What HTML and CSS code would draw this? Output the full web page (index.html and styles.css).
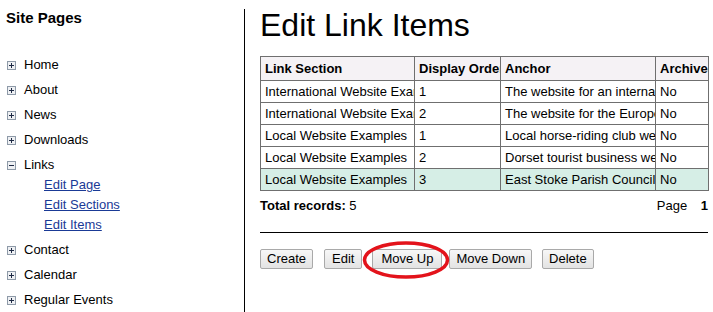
FILE: index.html
```html
<html>
	<head>
		<title>Edit Link Items</title>
		<link rel="stylesheet" href="styles.css">
	</head>
	<body>
		<div class="page">
			<div class="sidebar">
				<h2>Site Pages</h2>
				<ul class="tree">
					<li><svg class="node" width="9" height="9" viewBox="0 0 9 9"><rect x="0.5" y="0.5" width="8" height="8" fill="#eef0f3" stroke="#8e9aa8"/><path d="M2 4.5h5M4.5 2v5" stroke="#1e2a44"/></svg>Home</li>
					<li><svg class="node" width="9" height="9" viewBox="0 0 9 9"><rect x="0.5" y="0.5" width="8" height="8" fill="#eef0f3" stroke="#8e9aa8"/><path d="M2 4.5h5M4.5 2v5" stroke="#1e2a44"/></svg>About</li>
					<li><svg class="node" width="9" height="9" viewBox="0 0 9 9"><rect x="0.5" y="0.5" width="8" height="8" fill="#eef0f3" stroke="#8e9aa8"/><path d="M2 4.5h5M4.5 2v5" stroke="#1e2a44"/></svg>News</li>
					<li><svg class="node" width="9" height="9" viewBox="0 0 9 9"><rect x="0.5" y="0.5" width="8" height="8" fill="#eef0f3" stroke="#8e9aa8"/><path d="M2 4.5h5M4.5 2v5" stroke="#1e2a44"/></svg>Downloads</li>
					<li><svg class="node" width="9" height="9" viewBox="0 0 9 9"><rect x="0.5" y="0.5" width="8" height="8" fill="#eef0f3" stroke="#8e9aa8"/><path d="M2 4.5h5" stroke="#1e2a44"/></svg>Links
						<ul class="sub">
							<li><a href="javascript:void(0);">Edit Page</a></li>
							<li><a href="javascript:void(0);">Edit Sections</a></li>
							<li><a href="javascript:void(0);">Edit Items</a></li>
						</ul>
					</li>
					<li><svg class="node" width="9" height="9" viewBox="0 0 9 9"><rect x="0.5" y="0.5" width="8" height="8" fill="#eef0f3" stroke="#8e9aa8"/><path d="M2 4.5h5M4.5 2v5" stroke="#1e2a44"/></svg>Contact</li>
					<li><svg class="node" width="9" height="9" viewBox="0 0 9 9"><rect x="0.5" y="0.5" width="8" height="8" fill="#eef0f3" stroke="#8e9aa8"/><path d="M2 4.5h5M4.5 2v5" stroke="#1e2a44"/></svg>Calendar</li>
					<li><svg class="node" width="9" height="9" viewBox="0 0 9 9"><rect x="0.5" y="0.5" width="8" height="8" fill="#eef0f3" stroke="#8e9aa8"/><path d="M2 4.5h5M4.5 2v5" stroke="#1e2a44"/></svg>Regular Events</li>
				</ul>
			</div>
			<div class="main">
				<h1>Edit Link Items</h1>
				<table class="grid">
					<colgroup>
						<col class="c-section">
						<col class="c-order">
						<col class="c-anchor">
						<col class="c-archived">
					</colgroup>
					<tr>
						<th>Link Section</th>
						<th>Display Order</th>
						<th>Anchor</th>
						<th>Archived</th>
					</tr>
					<tr>
						<td>International Website Examples</td>
						<td>1</td>
						<td>The website for an international charity</td>
						<td>No</td>
					</tr>
					<tr>
						<td>International Website Examples</td>
						<td>2</td>
						<td>The website for the European office</td>
						<td>No</td>
					</tr>
					<tr>
						<td>Local Website Examples</td>
						<td>1</td>
						<td>Local horse-riding club website</td>
						<td>No</td>
					</tr>
					<tr>
						<td>Local Website Examples</td>
						<td>2</td>
						<td>Dorset tourist business website</td>
						<td>No</td>
					</tr>
					<tr class="selected">
						<td>Local Website Examples</td>
						<td>3</td>
						<td>East Stoke Parish Council</td>
						<td>No</td>
					</tr>
				</table>
				<div class="summary">
					<span><b>Total records:</b> 5</span>
					<span>Page <b class="page-no">1</b></span>
				</div>
				<hr>
				<div class="toolbar">
					<button class="btn btn-create">Create</button>
					<button class="btn btn-edit">Edit</button>
					<button class="btn btn-up">Move Up</button>
					<button class="btn btn-down">Move Down</button>
					<button class="btn">Delete</button>
					<svg class="circle" width="88" height="40" viewBox="0 0 88 40"><ellipse cx="44" cy="20" rx="41.5" ry="17" fill="none" stroke="#e3131b" stroke-width="3.5"/></svg>
				</div>
			</div>
		</div>
	</body>
</html>
```

FILE: styles.css
```css
* {
	margin: 0;
	padding: 0;
	box-sizing: border-box;
}
body {
	font-family: "Liberation Sans", Arial, sans-serif;
	font-size: 13px;
	color: #000;
	background: #fff;
}
.page {
	display: flex;
	align-items: flex-start;
}
.sidebar {
	width: 245px;
	margin-top: 9px;
	min-height: 303px;
	padding-left: 7px;
	border-right: 1px solid #000;
}
.sidebar h2 {
	font-size: 15px;
	line-height: 17px;
	margin-left: -1px;
}
.tree {
	list-style: none;
	margin-top: 29px;
}
.tree li {
	line-height: 20px;
	margin-bottom: 5px;
}
.node {
	vertical-align: -1px;
	margin-right: 8px;
}
.sub {
	list-style: none;
	padding-left: 37px;
}
.tree .sub li {
	margin-bottom: 0;
}
.sub a {
	color: #1a3a96;
	text-decoration: underline;
}
.main {
	padding: 7px 0 0 15px;
}
h1 {
	font-size: 32px;
	font-weight: normal;
	line-height: 37px;
}
.grid {
	margin-top: 12px;
	border-collapse: collapse;
	table-layout: fixed;
	width: 448px;
	font-family: "Liberation Sans", Arial, sans-serif;
	font-size: 13px;
}
.c-section { width: 154px; }
.c-order { width: 86px; }
.c-anchor { width: 155px; }
.c-archived { width: 53px; }
.grid th, .grid td {
	border: 1px solid #6f6f6f;
	padding: 3px 4px;
	line-height: 15px;
	text-align: left;
	white-space: nowrap;
	overflow: hidden;
}
.grid th {
	padding: 4px 4px;
	background: #f5f2f5;
}
.grid tr.selected td {
	background: #d6eee6;
}
.summary {
	width: 448px;
	margin-top: 7px;
	line-height: 15px;
	display: flex;
	justify-content: space-between;
}
.page-no {
	margin-left: 10px;
}
hr {
	width: 448px;
	border: none;
	border-top: 1px solid #000;
	margin-top: 19px;
}
.toolbar {
	position: relative;
	display: flex;
	margin-top: 16px;
}
.btn {
	font-family: "Liberation Sans", Arial, sans-serif;
	font-size: 13px;
	line-height: 16px;
	padding: 1px 6px;
	border: 1px solid #a9a9a9;
	border-radius: 2px;
	background: linear-gradient(#f7f7f7, #e3e3e3);
	color: #000;
}
.btn-create { margin-right: 11px; }
.btn-edit { margin-right: 10px; padding: 1px 7px; }
.btn-up { margin-right: 7px; padding: 1px 8px; }
.btn-down { margin-right: 10px; }
.circle {
	position: absolute;
	left: 102px;
	top: -9px;
}
```
